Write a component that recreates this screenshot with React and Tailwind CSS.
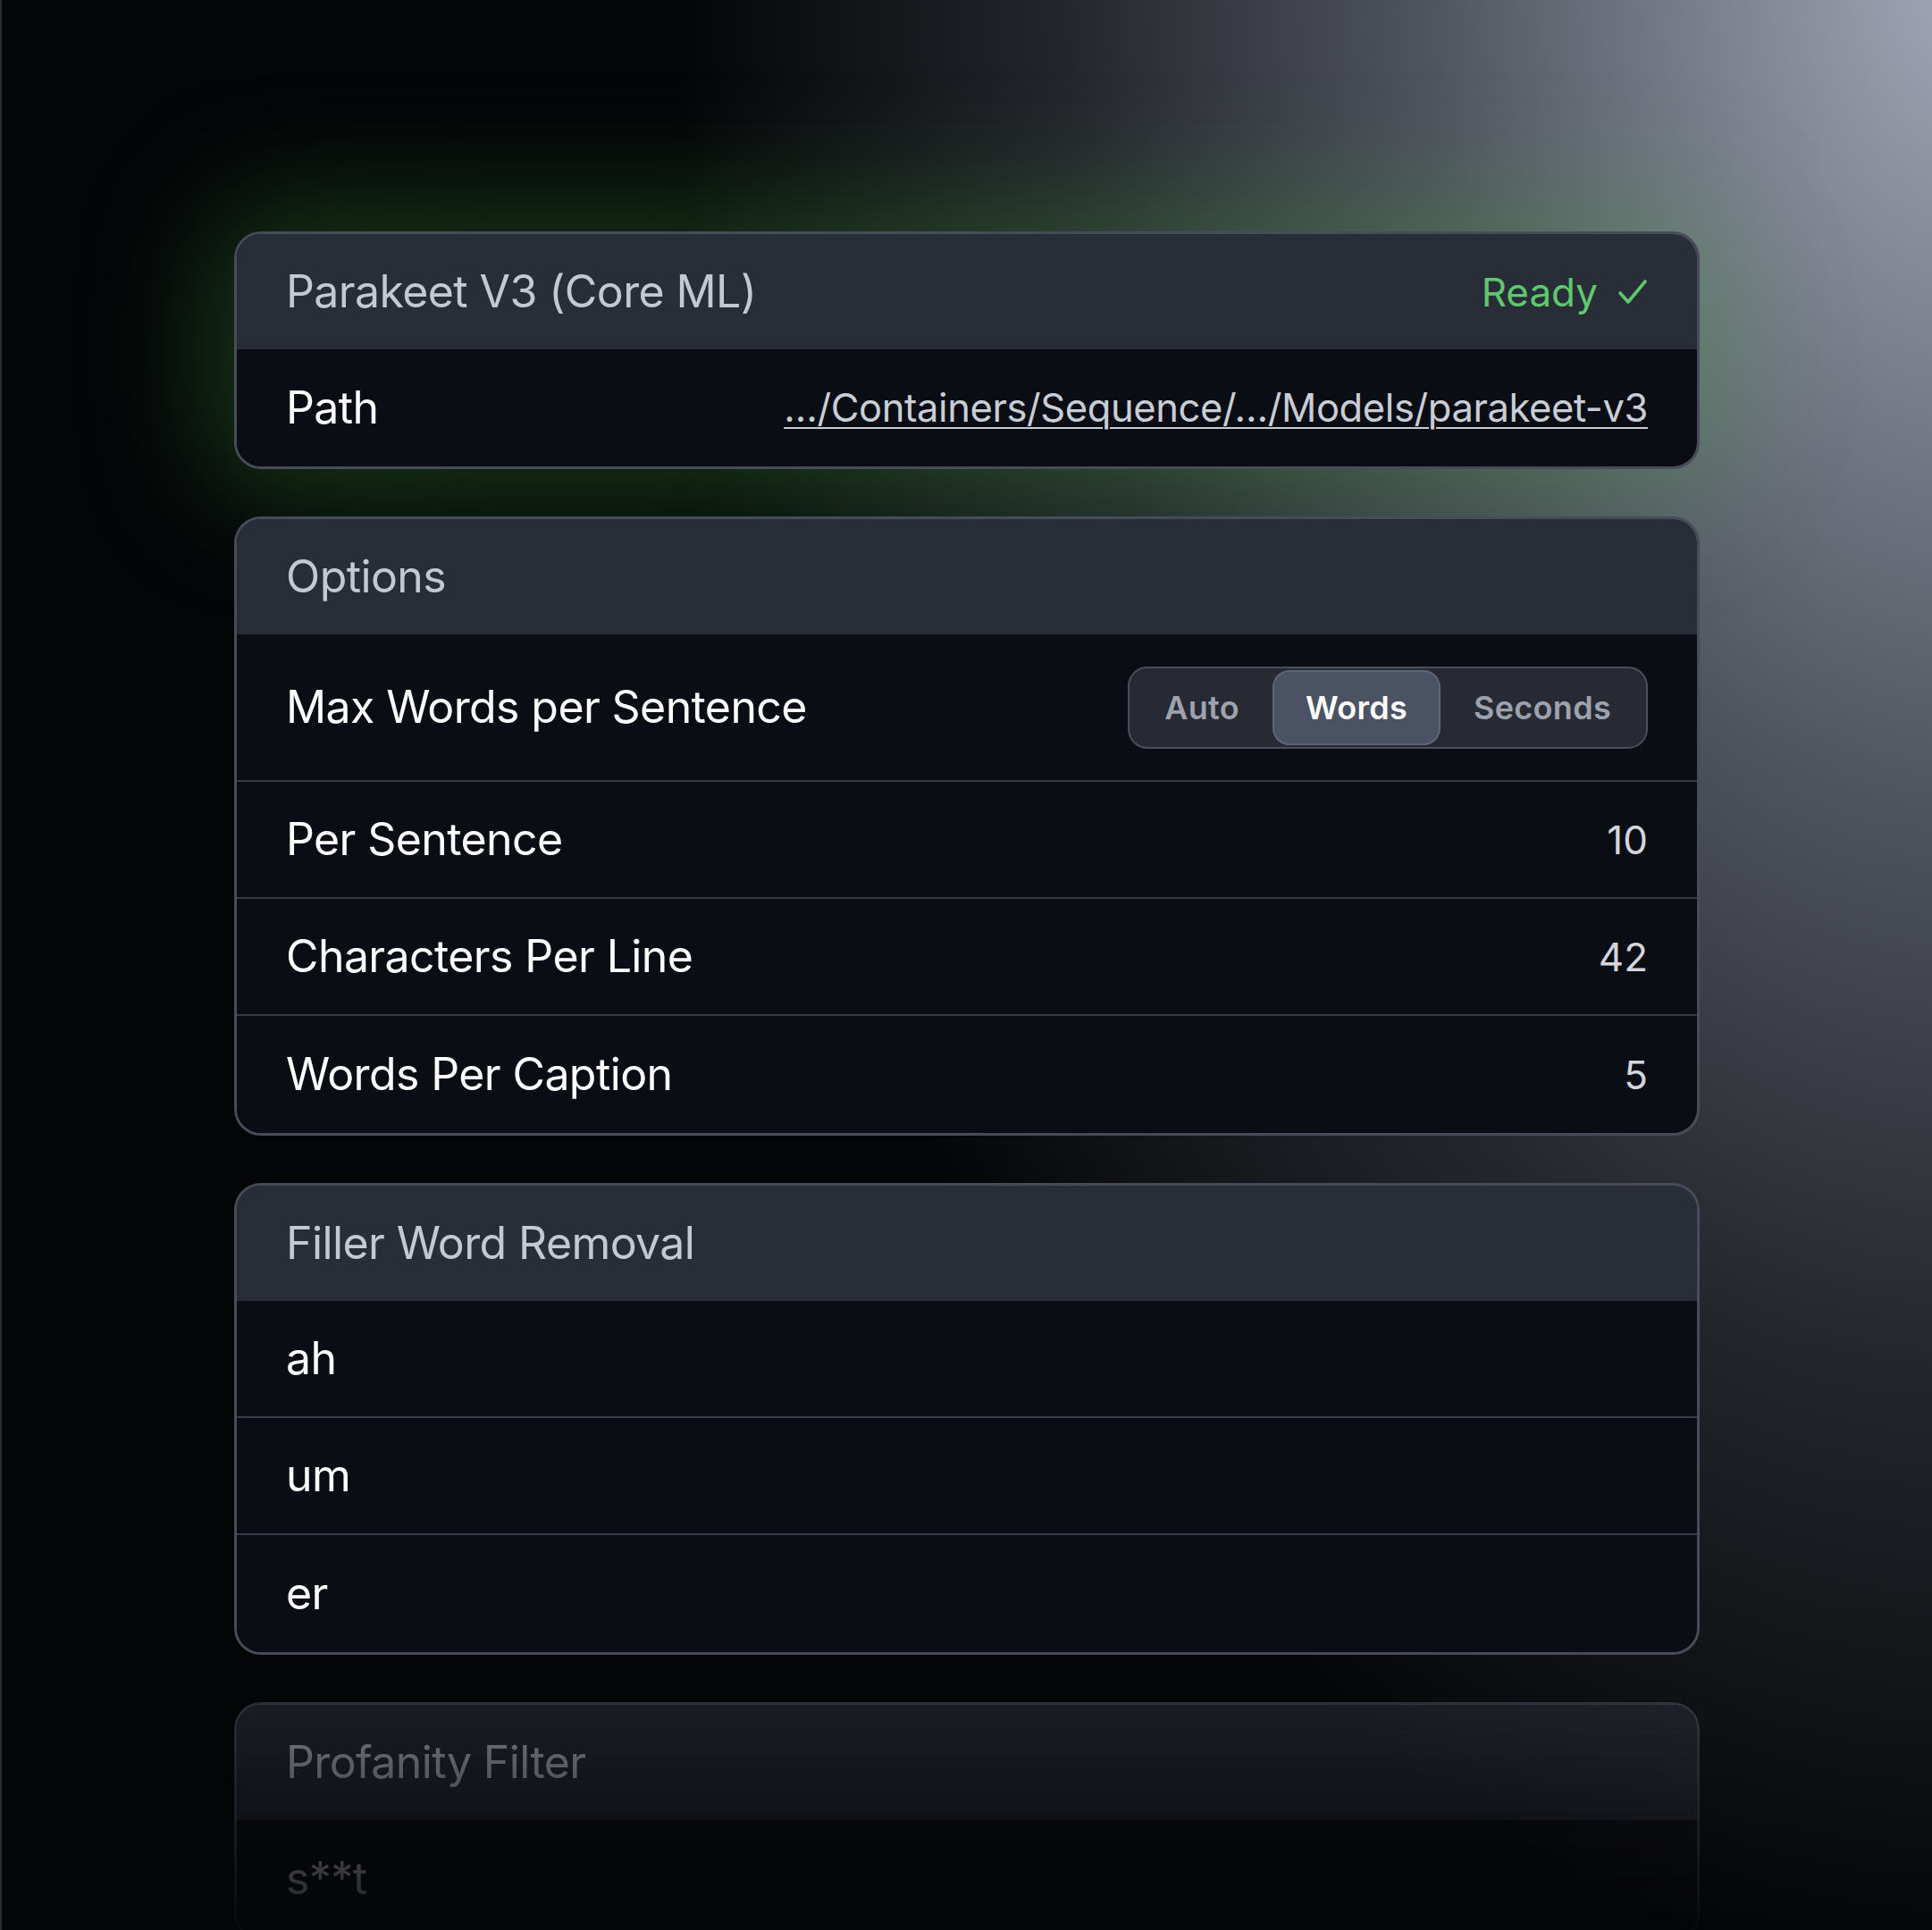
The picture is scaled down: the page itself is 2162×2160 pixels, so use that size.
import React from 'react';

const font = { fontFamily: 'Inter, "Noto Sans", sans-serif' };

const Card = ({ title, right, children, className = '' }) => (
  <div className={`rounded-[30px] border-[3px] border-[#474c58] overflow-hidden ${className}`}>
    <div className="h-[129px] bg-[#292d38] px-[55px] flex items-center justify-between">
      <span className="text-[50px] text-[#c4c8d1] tracking-[-0.6px]">{title}</span>
      {right}
    </div>
    <div className="bg-[#0a0d14] flex flex-col divide-y-2 divide-[#373b45]">{children}</div>
  </div>
);

const Row = ({ label, value, children, tall }) => (
  <div className={`${tall ? 'h-[165px]' : 'h-[131px]'} px-[55px] flex items-center justify-between`}>
    <span className="text-[50px] text-white tracking-[-0.6px]">{label}</span>
    {value !== undefined && <span className="text-[44px] text-[#d3d6dd]">{value}</span>}
    {children}
  </div>
);

const Segmented = () => {
  const options = ['Auto', 'Words', 'Seconds'];
  return (
    <div className="flex items-center h-[92px] rounded-[22px] border-2 border-[#4a4f5b] bg-[#272a33] p-[2px]">
      {options.map(o => (
        <div
          key={o}
          className={`h-full flex items-center px-[35px] rounded-[19px] text-[36px] font-semibold tracking-[0.3px] ${
            o === 'Words'
              ? 'bg-[#4a5263] border-2 border-[#5e6676] text-white'
              : 'text-[#9da2ae] border-2 border-transparent'
          }`}
        >
          {o}
        </div>
      ))}
    </div>
  );
};

const App = () => {
  return (
    <div className="relative w-full h-[2160px] overflow-hidden bg-[#040507] border-l-2 border-[#2a2c31]" style={font}>
      <div className="absolute inset-0 bg-[radial-gradient(ellipse_1450px_2250px_at_102%_-2%,#a3a9b9_0%,#7c818e_20%,#50545e_42%,#24262c_70%,transparent_100%)]" />

      <div className="relative ml-[260px] w-[1640px] pt-[259px] flex flex-col gap-[53px]">
        <Card
          className="shadow-[0_0_140px_25px_rgba(70,160,70,0.35)]"
          title="Parakeet V3 (Core ML)"
          right={
            <span className="flex items-center gap-[22px] text-[44px] text-[#5fc86c]">
              Ready
              <svg width="34" height="30" viewBox="0 0 34 30" fill="none">
                <path d="M3 16 L12 26 L31 3" stroke="#5fc86c" strokeWidth="3.6" strokeLinecap="round" strokeLinejoin="round" />
              </svg>
            </span>
          }
        >
          <Row label="Path">
            <span className="text-[43.5px] text-[#c9cdd5] tracking-[-0.4px] underline underline-offset-[6px] decoration-2">
              …/Containers/Sequence/…/Models/parakeet-v3
            </span>
          </Row>
        </Card>

        <Card title="Options">
          <Row label="Max Words per Sentence" tall>
            <Segmented />
          </Row>
          <Row label="Per Sentence" value="10" />
          <Row label="Characters Per Line" value="42" />
          <Row label="Words Per Caption" value="5" />
        </Card>

        <Card title="Filler Word Removal">
          <Row label="ah" />
          <Row label="um" />
          <Row label="er" />
        </Card>

        <Card
          title="Profanity Filter"
          className="[mask-image:linear-gradient(to_bottom,rgba(0,0,0,0.6)_0px,rgba(0,0,0,0.1)_240px,transparent_330px)]"
        >
          <Row label="s**t" />
        </Card>
      </div>
    </div>
  );
};

export default App;
